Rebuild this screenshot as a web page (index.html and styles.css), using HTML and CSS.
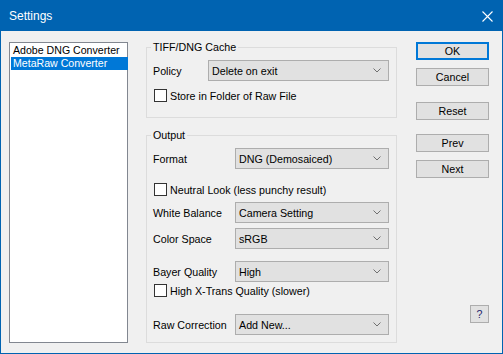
FILE: index.html
```html
<!DOCTYPE html>
<html>
<head>
    <title>Settings</title>
    <link rel="stylesheet" href="styles.css">
</head>
<body>
    <div class="window">
        <div class="titlebar">
            <span class="title">Settings</span>
            <svg class="close" width="11" height="11" viewBox="0 0 11 11">
                <path d="M0.5 0.5 L10.5 10.5 M10.5 0.5 L0.5 10.5" stroke="#fff" stroke-width="1.1" fill="none"/>
            </svg>
        </div>

        <div class="dialog">
            <!-- converter list -->
            <div class="list">
                <div class="list-item">Adobe DNG Converter</div>
                <div class="list-item selected">MetaRaw Converter</div>
            </div>

            <div class="groups">
                <fieldset class="group cache">
                    <legend>TIFF/DNG Cache</legend>
                    <div class="row row-policy">
                        <span class="label">Policy</span>
                        <div class="combo">Delete on exit<svg class="chevron" width="8" height="5" viewBox="0 0 8 5"><path d="M0.5 0.5 L4 4 L7.5 0.5" stroke="#707070" fill="none"/></svg></div>
                    </div>
                    <div class="check row-store"><span class="box"></span>Store in Folder of Raw File</div>
                </fieldset>

                <fieldset class="group output">
                    <legend>Output</legend>
                    <div class="row row-format">
                        <span class="label">Format</span>
                        <div class="combo">DNG (Demosaiced)<svg class="chevron" width="8" height="5" viewBox="0 0 8 5"><path d="M0.5 0.5 L4 4 L7.5 0.5" stroke="#707070" fill="none"/></svg></div>
                    </div>
                    <div class="check row-neutral"><span class="box"></span>Neutral Look (less punchy result)</div>
                    <div class="row row-wb">
                        <span class="label">White Balance</span>
                        <div class="combo">Camera Setting<svg class="chevron" width="8" height="5" viewBox="0 0 8 5"><path d="M0.5 0.5 L4 4 L7.5 0.5" stroke="#707070" fill="none"/></svg></div>
                    </div>
                    <div class="row row-space">
                        <span class="label">Color Space</span>
                        <div class="combo">sRGB<svg class="chevron" width="8" height="5" viewBox="0 0 8 5"><path d="M0.5 0.5 L4 4 L7.5 0.5" stroke="#707070" fill="none"/></svg></div>
                    </div>
                    <div class="row row-bayer">
                        <span class="label">Bayer Quality</span>
                        <div class="combo">High<svg class="chevron" width="8" height="5" viewBox="0 0 8 5"><path d="M0.5 0.5 L4 4 L7.5 0.5" stroke="#707070" fill="none"/></svg></div>
                    </div>
                    <div class="check row-xtrans"><span class="box"></span>High X-Trans Quality (slower)</div>
                    <div class="row row-raw">
                        <span class="label">Raw Correction</span>
                        <div class="combo">Add New...<svg class="chevron" width="8" height="5" viewBox="0 0 8 5"><path d="M0.5 0.5 L4 4 L7.5 0.5" stroke="#707070" fill="none"/></svg></div>
                    </div>
                </fieldset>
            </div>

            <div class="buttons">
                <button class="btn default">OK</button>
                <button class="btn btn-cancel">Cancel</button>
                <button class="btn btn-reset">Reset</button>
                <button class="btn btn-prev">Prev</button>
                <button class="btn btn-next">Next</button>
                <button class="btn btn-help">?</button>
            </div>
        </div>
    </div>
</body>
</html>
```

FILE: styles.css
```css
body {
    margin: 0;
    font-family: "Liberation Sans", Arial, sans-serif;
    font-size: 10.7px;
    color: #000;
    background: #f0f0f0;
}
.window {
    width: 503px;
    height: 354px;
    box-sizing: border-box;
    border: 1px solid #0063b1;
    background: #f0f0f0;
    display: flex;
    flex-direction: column;
}
.titlebar {
    height: 30px;
    flex-shrink: 0;
    background: #0063b1;
    color: #fff;
    display: flex;
    align-items: center;
    justify-content: space-between;
    padding: 0 9px 0 8px;
}
.title {
    font-size: 12px;
}
.close {
    display: block;
}
.dialog {
    display: flex;
    align-items: flex-start;
    padding: 10px 0 0 8px;
}

/* list */
.list {
    width: 119px;
    height: 301px;
    box-sizing: border-box;
    margin-top: 1px;
    border: 1px solid #828790;
    background: #fff;
    padding: 1px 0 0 1px;
    font-size: 10.6px;
}
.list-item {
    height: 13px;
    line-height: 13px;
    padding-left: 2px;
    width: 115px;
    white-space: nowrap;
}
.list-item.selected {
    background: #0078d7;
    color: #fff;
}

/* groups */
.groups {
    width: 251px;
    margin-left: 18px;
}
.group {
    margin: 0;
    border: 1px solid #dcdcdc;
    padding: 0 7px 0 6px;
    min-width: 0;
}
.group legend {
    padding: 0 2px;
    margin-left: -2px;
    line-height: 13px;
}
.cache {
    padding-bottom: 15px;
}
.output {
    margin-top: 11px;
    padding-bottom: 7px;
}
.row {
    display: flex;
    align-items: center;
}
.label {
    flex-shrink: 0;
}
.cache .label {
    width: 55px;
}
.output .label {
    width: 82px;
}
.combo {
    flex: 1;
    height: 21px;
    box-sizing: border-box;
    border: 1px solid #adadad;
    background: #e1e1e1;
    padding: 0 7px 0 3px;
    display: flex;
    align-items: center;
    justify-content: space-between;
}
.chevron {
    display: block;
}
.check {
    display: flex;
    align-items: center;
    height: 13px;
}
.box {
    width: 13px;
    height: 13px;
    box-sizing: border-box;
    border: 1px solid #333;
    background: #fff;
    margin: 0 3px 0 1px;
}
.row-policy { margin-top: 6px; }
.row-store { margin-top: 8px; }
.row-format { margin-top: 6px; }
.row-neutral { margin-top: 14px; }
.row-wb { margin-top: 6px; }
.row-space { margin-top: 5px; }
.row-bayer { margin-top: 12px; }
.row-xtrans { margin-top: 2px; }
.row-raw { margin-top: 17px; }

/* buttons */
.buttons {
    width: 73px;
    margin: 1px 0 0 19px;
    display: flex;
    flex-direction: column;
    align-items: flex-end;
}
.btn {
    width: 73px;
    height: 18px;
    box-sizing: border-box;
    border: 1px solid #adadad;
    background: #e1e1e1;
    font-family: inherit;
    font-size: 10.7px;
    color: #000;
    padding: 0;
    line-height: 14px;
}
.btn.default {
    border: 2px solid #0078d7;
}
.btn-cancel { margin-top: 8px; }
.btn-reset { margin-top: 16px; }
.btn-prev { margin-top: 14px; }
.btn-next { margin-top: 8px; }
.btn-help {
    width: 19px;
    margin-top: 127px;
    color: #1c1c6c;
}
```
